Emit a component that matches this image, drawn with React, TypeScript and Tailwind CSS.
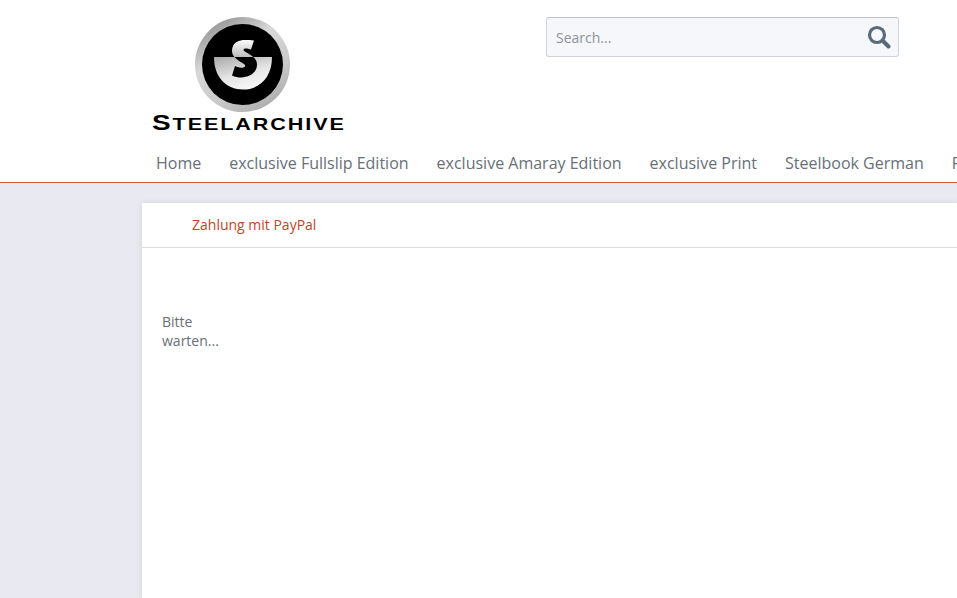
export default function App() {
  const nav = ["Home", "exclusive Fullslip Edition", "exclusive Amaray Edition", "exclusive Print", "Steelbook German", "Funko Pop"];
  const sPath = "M59 23.500 L56 32.500 C52 31 49 31 48.500 32.500 C48 34 51 35 54 37 C59 40 62 43 62 47.500 C62 56 54 60.500 46 60.500 C43 60.500 40 60 37 58.500 L40 49 C43 50.500 46 51 48 50.500 C50.500 50 51 48.500 49 47 C46 45 42 43 39.500 40 C37 37 36.500 34 37.500 30.500 C39 25 44 23 50 23 C53 23 56 23 59 23.500 Z";
  return (
    <div className="h-[598px] w-[957px] overflow-hidden bg-[#e8e9f1] font-['Open_Sans',sans-serif]">
      <header className="h-[183px] border-b border-[#cf5a3c] bg-white">
        <div className="flex h-[148px]">
          <div className="ml-[151px] flex w-[194px] flex-col items-start pt-[17px]">
            <svg width="96" height="96" viewBox="0 0 96 96" className="ml-[44px] shrink-0">
              <defs>
                <linearGradient id="ring" x1="0.2" y1="0" x2="0.8" y2="1">
                  <stop offset="0" stopColor="#8e8e8e" />
                  <stop offset="0.35" stopColor="#d8d8d8" />
                  <stop offset="0.7" stopColor="#c8c8c8" />
                  <stop offset="1" stopColor="#a8a8a8" />
                </linearGradient>
                <linearGradient id="bowl" x1="0" y1="0" x2="0.5" y2="1">
                  <stop offset="0" stopColor="#a8a8a8" />
                  <stop offset="0.6" stopColor="#e4e4e4" />
                  <stop offset="1" stopColor="#f6f6f6" />
                </linearGradient>
                <linearGradient id="sil" gradientUnits="userSpaceOnUse" x1="0" y1="22" x2="0" y2="40">
                  <stop offset="0" stopColor="#ffffff" />
                  <stop offset="1" stopColor="#bdbdbd" />
                </linearGradient>
                <clipPath id="above"><rect x="0" y="0" width="96" height="40" /></clipPath>
                <clipPath id="below"><rect x="0" y="40" width="96" height="56" /></clipPath>
              </defs>
              <circle cx="47.500" cy="47.500" r="47.500" fill="url(#ring)" />
              <circle cx="47.500" cy="47.500" r="40.500" fill="#000" />
              <path d="M19 40 H77 C77 60 65 72.500 48 72.500 C31 72.500 19 60 19 40 Z" fill="url(#bowl)" />
              <path d={sPath} fill="#000" clipPath="url(#below)" />
              <path d={sPath} fill="url(#sil)" clipPath="url(#above)" />
            </svg>
            <div className="-mt-[1px] ml-[1px] origin-left scale-x-[1.27] whitespace-nowrap text-[17px] font-bold leading-[22px] tracking-[1.500px] text-black [font-family:'Liberation_Sans',sans-serif]">
              <span className="text-[22px]">S</span>TEELARCHIVE
            </div>
          </div>
          <div className="ml-[201px] mt-[17px] flex h-10 w-[353px] items-center justify-between rounded-[3px] border border-[#d0d1dc] border-t-[#bfc0cf] bg-[#f6f7fa] pl-[9px] pr-[7px]">
            <span className="translate-y-[1px] text-sm text-[#8b929b]">Search...</span>
            <svg width="24" height="24" viewBox="0 0 24 24" fill="none" stroke="#5a6a7a">
              <circle cx="10" cy="10" r="7.500" strokeWidth="3.200" />
              <path d="M15.500 15.500 L21.500 21.500" strokeWidth="4" strokeLinecap="round" />
            </svg>
          </div>
        </div>
        <nav className="flex h-[34px] items-center gap-[28px] whitespace-nowrap pb-[5px] pl-[156px] text-base text-[#676f78]">
          {nav.map((n) => (
            <span key={n}>{n}</span>
          ))}
        </nav>
      </header>
      <main className="ml-[142px] mt-5 h-[395px] bg-white shadow-[0_0_6px_rgba(0,0,0,0.1)]">
        <div className="flex h-[45px] items-center border-b border-[#dcdde3] pl-[50px] text-sm text-[#c0452c]">
          Zahlung mit PayPal
        </div>
        <p className="ml-5 mt-[64px] w-[70px] text-sm leading-[19px] text-[#676f78]">Bitte warten...</p>
      </main>
    </div>
  );
}
